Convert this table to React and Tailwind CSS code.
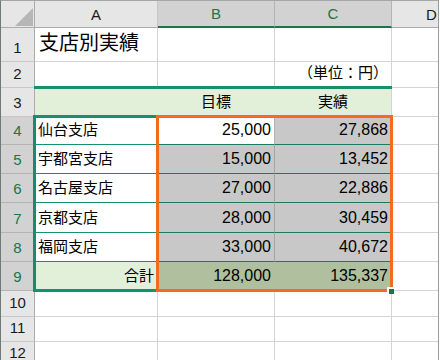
import React from "react";

function RowHead({ n, sel }) {
  return (
    <div
      className={
        sel
          ? "w-[34px] shrink-0 flex items-end justify-center pb-[6px] border-r border-b border-r-[#ababab] border-b-[#b4b4b4] bg-[#d2d2d2] text-[#217346] text-[15px] leading-none"
          : "w-[34px] shrink-0 flex items-end justify-center pb-[6px] border-r border-b border-r-[#ababab] border-b-[#c8c8c8] bg-[#e6e6e6] text-[#1a1a1a] text-[15px] leading-none"
      }
    >
      {n}
    </div>
  );
}

function Blank({ className }) {
  return <div className={"shrink-0 border-r border-b border-[#d4d4d4] " + (className || "")} />;
}

function DCell() {
  return <div className="flex-1 border-b border-[#d4d4d4]" />;
}

const names = ["仙台支店", "宇都宮支店", "名古屋支店", "京都支店", "福岡支店"];
const target = ["25,000", "15,000", "27,000", "28,000", "33,000"];
const actual = ["27,868", "13,452", "22,886", "30,459", "40,672"];
const heights = ["h-[28px]", "h-[29px]", "h-[29px]", "h-[30px]", "h-[29px]"];

export default function App() {
  return (
    <div className="w-[440px] h-[360px] bg-white relative overflow-hidden font-['Liberation_Sans','Noto_Sans_CJK_JP',sans-serif] text-black">
      <div className="w-[439px] h-[360px] border-l border-t border-r border-l-[#6d7d75] border-t-[#a6a6a6] border-r-[#9a9a9a] flex flex-col">
        {/* column headers */}
        <div className="flex h-[27px] shrink-0">
          <div className="w-[34px] shrink-0 bg-[#e6e6e6] border-r border-b border-r-[#ababab] border-b-[#ababab] flex justify-end items-end pr-[1px] pb-[1px]">
            <svg width="18" height="18" viewBox="0 0 18 18">
              <polygon points="18,0 18,18 0,18" fill="#b6b6b6" />
            </svg>
          </div>
          <div className="w-[123px] shrink-0 bg-[#e6e6e6] border-r border-b border-r-[#c6c6c6] border-b-[#ababab] flex items-center justify-center text-[15px] leading-none text-[#1a1a1a]">
            A
          </div>
          <div className="w-[117px] shrink-0 bg-[#d2d2d2] border-r border-b-2 border-r-[#b4b4b4] border-b-[#217346] flex items-center justify-center text-[15px] leading-none text-[#217346]">
            B
          </div>
          <div className="w-[117px] shrink-0 bg-[#d2d2d2] border-r border-b-2 border-r-[#b4b4b4] border-b-[#217346] flex items-center justify-center text-[15px] leading-none text-[#217346]">
            C
          </div>
          <div className="flex-1 bg-[#e6e6e6] border-b border-b-[#ababab] flex items-center pl-[34px] text-[15px] leading-none text-[#1a1a1a]">
            D
          </div>
        </div>

        {/* row 1 */}
        <div className="flex h-[34px] shrink-0">
          <RowHead n="1" />
          <div className="w-[123px] shrink-0 border-r border-b border-[#d4d4d4] flex items-end pb-[8px] pl-[4px] text-[20px] leading-none whitespace-nowrap">
            支店別実績
          </div>
          <Blank className="w-[117px]" />
          <Blank className="w-[117px]" />
          <DCell />
        </div>

        {/* row 2 */}
        <div className="flex h-[26px] shrink-0">
          <RowHead n="2" />
          <Blank className="w-[123px]" />
          <Blank className="w-[117px]" />
          <div className="w-[117px] shrink-0 border-r border-b border-[#d4d4d4] flex items-end justify-end pb-[7px] pr-[3px] text-[15px] leading-none whitespace-nowrap">
            （単位：円）
          </div>
          <DCell />
        </div>

        {/* row 3 */}
        <div className="flex h-[29px] shrink-0">
          <RowHead n="3" />
          <div className="w-[123px] shrink-0 bg-[#e2efd9] border-r border-b border-[#e2efd9]" />
          <div className="w-[117px] shrink-0 bg-[#e2efd9] border-r border-b border-[#e2efd9] flex items-end justify-center pb-[7px] text-[15px] leading-none">
            目標
          </div>
          <div className="w-[117px] shrink-0 bg-[#e2efd9] border-r border-b border-r-[#d4d4d4] border-b-[#e2efd9] flex items-end justify-center pb-[7px] text-[15px] leading-none">
            実績
          </div>
          <DCell />
        </div>

        {/* rows 4-8 */}
        {names.map((nm, i) => (
          <div key={nm} className={"flex shrink-0 " + heights[i]}>
            <RowHead n={String(i + 4)} sel />
            <div className="w-[123px] shrink-0 bg-white border-r border-b border-r-[#d4d4d4] border-b-[#17906f] flex items-end pb-[7px] pl-[3px] text-[15px] leading-none whitespace-nowrap">
              {nm}
            </div>
            <div
              className={
                i === 0
                  ? "w-[117px] shrink-0 bg-white border-r border-b border-r-[#b4b4b4] border-b-[#1b7a5f] flex items-end justify-end pb-[6px] pr-[3px] text-[16px] leading-none"
                  : "w-[117px] shrink-0 bg-[#c8c8c8] border-r border-b border-r-[#a6a6a6] border-b-[#1b7a5f] flex items-end justify-end pb-[6px] pr-[3px] text-[16px] leading-none"
              }
            >
              {target[i]}
            </div>
            <div className="w-[117px] shrink-0 bg-[#c8c8c8] border-r border-b border-r-[#d4d4d4] border-b-[#1b7a5f] flex items-end justify-end pb-[6px] pr-[3px] text-[16px] leading-none">
              {actual[i]}
            </div>
            <DCell />
          </div>
        ))}

        {/* row 9 */}
        <div className="flex h-[29px] shrink-0">
          <RowHead n="9" sel />
          <div className="w-[123px] shrink-0 bg-[#e2efd9] border-r border-b border-[#e2efd9] flex items-end justify-end pb-[7px] pr-[3px] text-[15px] leading-none">
            合計
          </div>
          <div className="w-[117px] shrink-0 bg-[#b0c09f] border-r border-b border-[#b0c09f] flex items-end justify-end pb-[6px] pr-[3px] text-[16px] leading-none">
            128,000
          </div>
          <div className="w-[117px] shrink-0 bg-[#b0c09f] border-r border-b border-r-[#d4d4d4] border-b-[#b0c09f] flex items-end justify-end pb-[6px] pr-[3px] text-[16px] leading-none">
            135,337
          </div>
          <DCell />
        </div>

        {/* rows 10-12 */}
        {[
          ["10", "h-[26px]"],
          ["11", "h-[25px]"],
          ["12", "h-[25px]"],
        ].map(([n, h]) => (
          <div key={n} className={"flex shrink-0 " + h}>
            <RowHead n={n} />
            <Blank className="w-[123px]" />
            <Blank className="w-[117px]" />
            <Blank className="w-[117px]" />
            <DCell />
          </div>
        ))}
      </div>

      {/* table borders drawn over the gridlines */}
      <div className="absolute left-[34px] top-[86px] w-[358px] h-[3px] bg-[#17906f]" />
      <div className="absolute left-[33px] top-[115px] w-[123px] h-[3px] bg-[#17906f]" />
      <div className="absolute left-[33px] top-[115px] w-[3px] h-[177px] bg-[#1b8a68]" />
      <div className="absolute left-[33px] top-[289px] w-[123px] h-[3px] bg-[#17906f]" />

      {/* selection rectangle */}
      <div className="absolute left-[156px] top-[115px] w-[237px] h-[177px] border-[3px] border-[#f26b21]" />
      <div className="absolute left-[387px] top-[287px] w-[7px] h-[7px] bg-white" />
      <div className="absolute left-[389px] top-[289px] w-[5px] h-[5px] bg-[#217346]" />
    </div>
  );
}
